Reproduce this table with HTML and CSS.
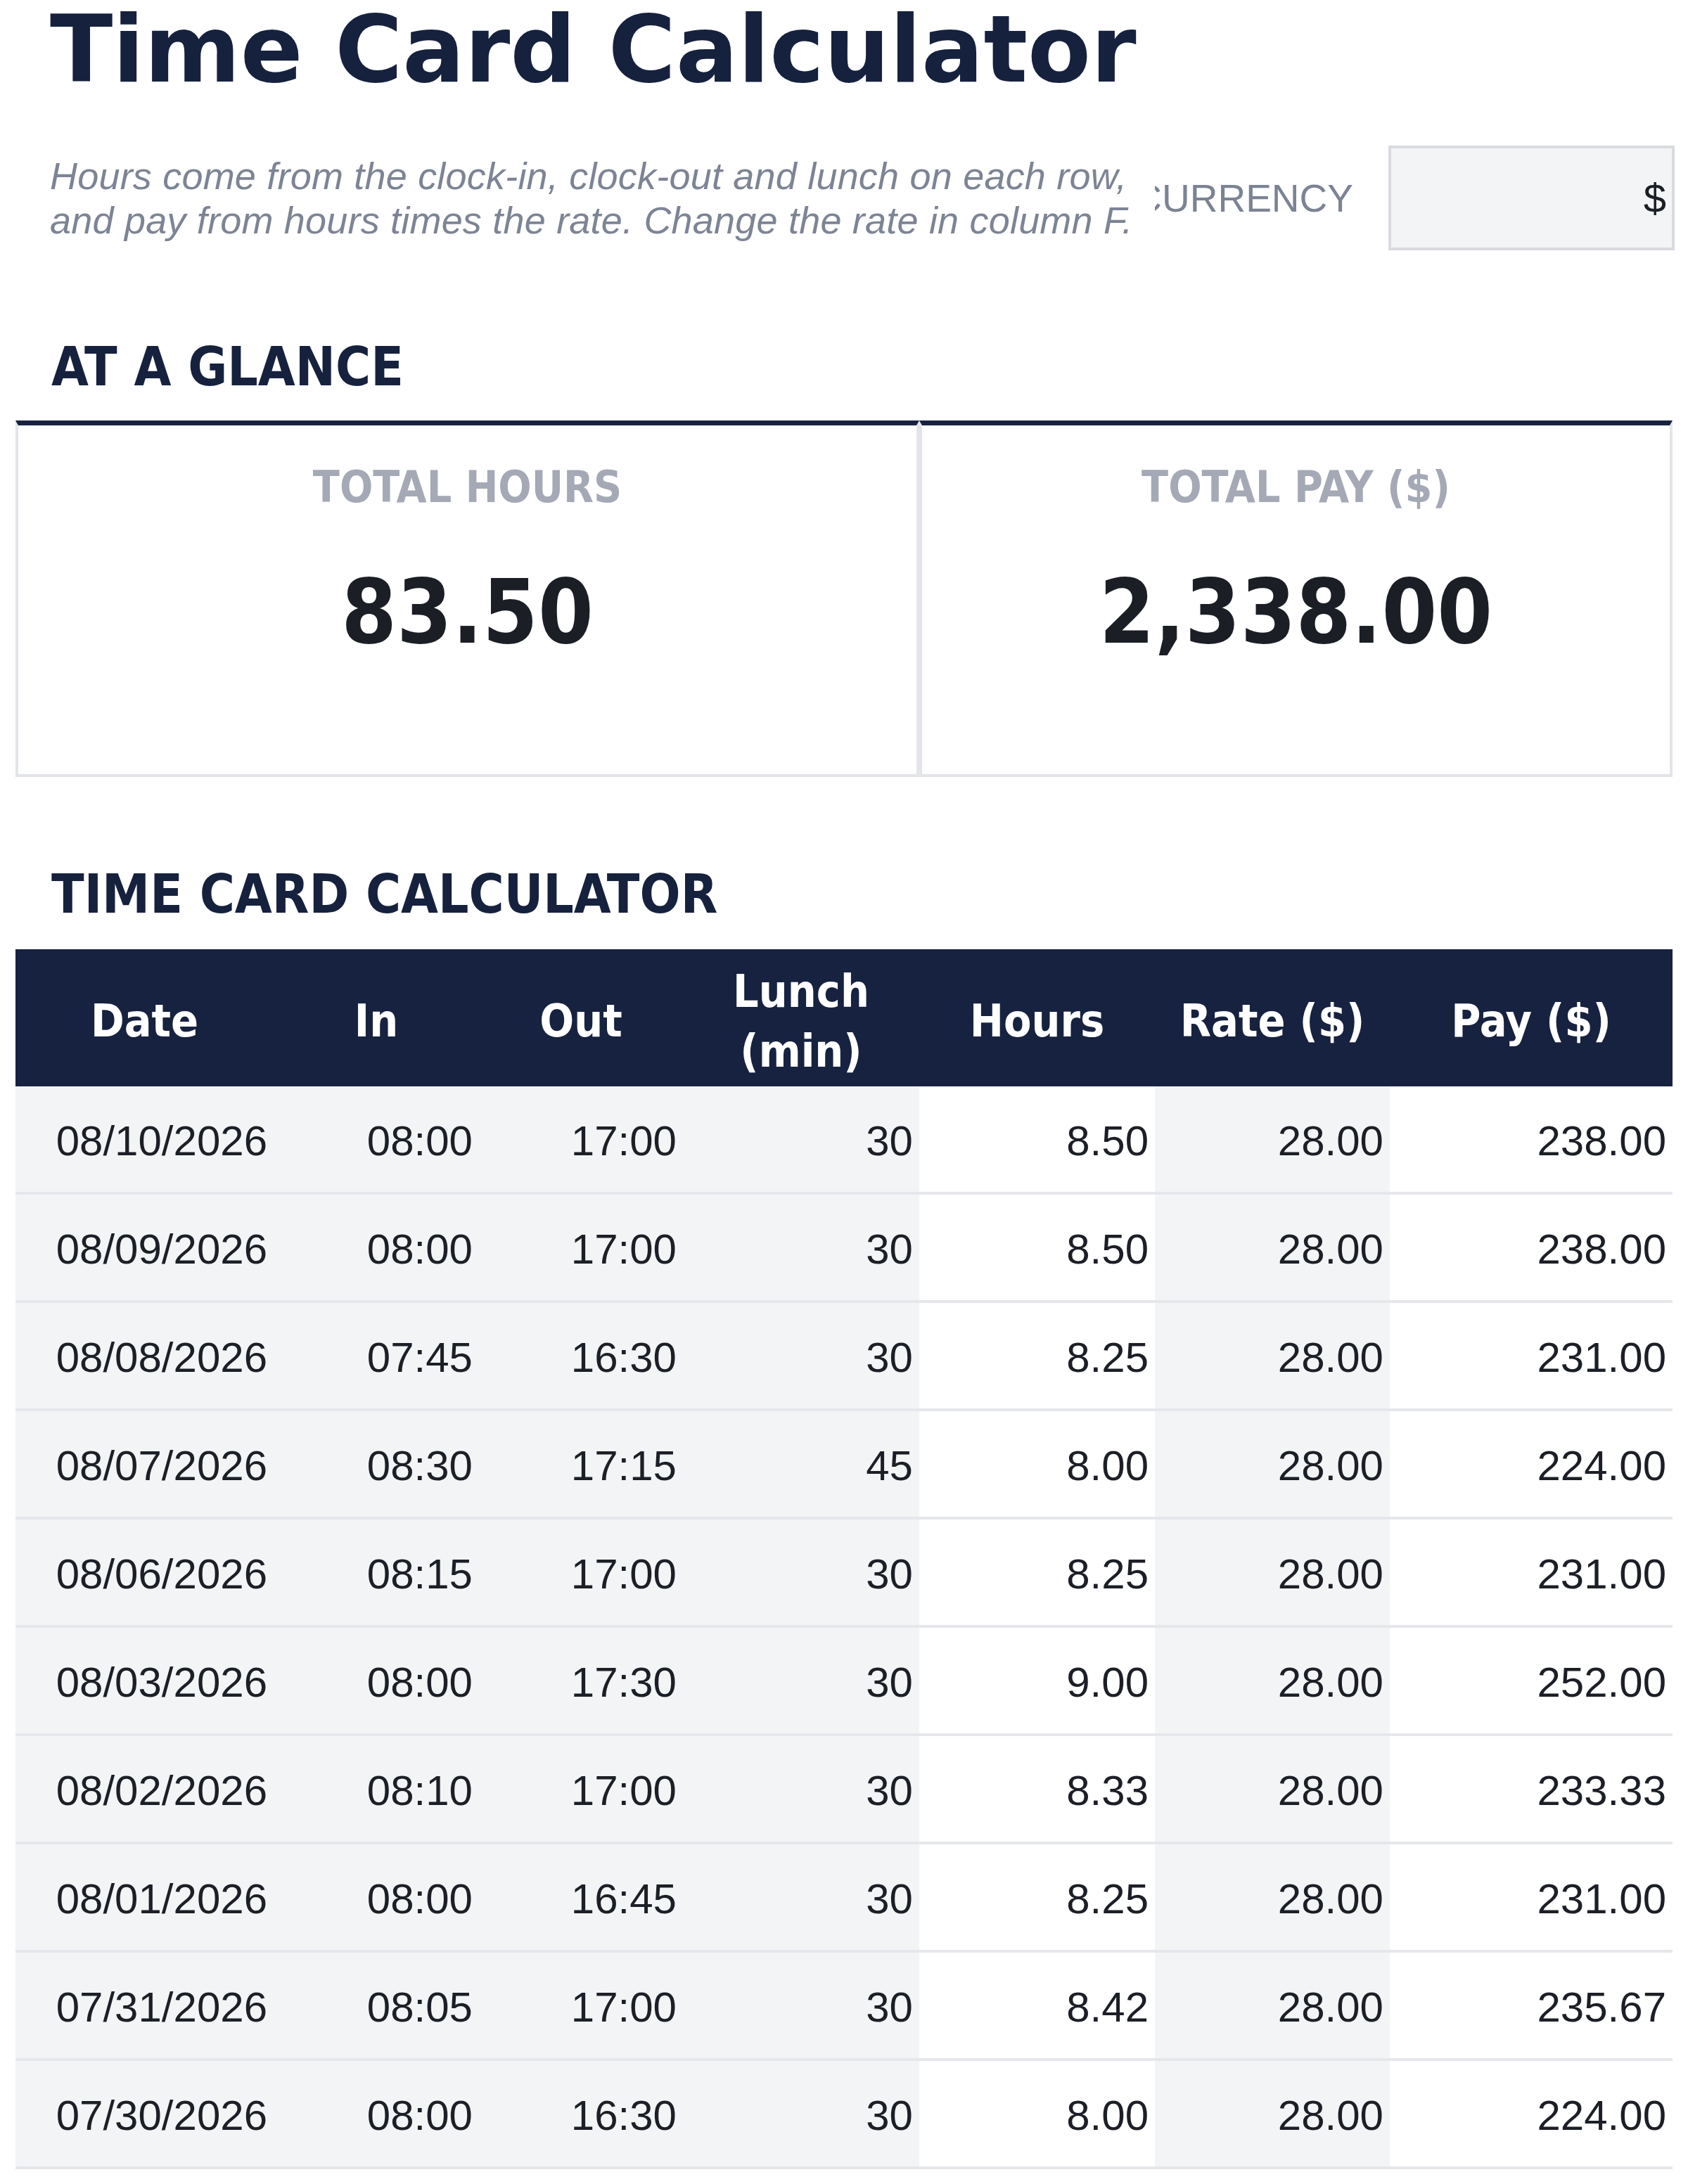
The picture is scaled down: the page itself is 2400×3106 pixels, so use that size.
FILE: index.html
```html
<!DOCTYPE html>
<html lang="en">
<head>
<meta charset="utf-8">
<title>Time Card Calculator</title>
<link rel="stylesheet" href="styles.css">
</head>
<body>
<main class="sheet">
  <header class="top">
    <h1 class="title">Time Card Calculator</h1>
    <div class="intro-row">
      <p class="intro">Hours come from the clock-in, clock-out and lunch on each row, and pay from hours times the rate. Change the rate in column F.</p>
      <div class="currency-label"><span>CURRENCY</span></div>
      <div class="currency-box">$</div>
    </div>
  </header>

  <h2 class="section-title">AT A GLANCE</h2>
  <div class="cards">
    <div class="card">
      <div class="card-label">TOTAL HOURS</div>
      <div class="card-value">83.50</div>
    </div>
    <div class="card">
      <div class="card-label">TOTAL PAY ($)</div>
      <div class="card-value">2,338.00</div>
    </div>
  </div>

  <h2 class="section-title section-title-table">TIME CARD CALCULATOR</h2>
  <div class="table">
    <div class="row head">
      <div class="hcell">Date</div>
      <div class="hcell">In</div>
      <div class="hcell">Out</div>
      <div class="hcell">Lunch (min)</div>
      <div class="hcell">Hours</div>
      <div class="hcell">Rate ($)</div>
      <div class="hcell">Pay ($)</div>
    </div>
    <div class="row"><div class="cell input">08/10/2026</div><div class="cell input">08:00</div><div class="cell input">17:00</div><div class="cell input">30</div><div class="cell">8.50</div><div class="cell input">28.00</div><div class="cell">238.00</div></div>
    <div class="row"><div class="cell input">08/09/2026</div><div class="cell input">08:00</div><div class="cell input">17:00</div><div class="cell input">30</div><div class="cell">8.50</div><div class="cell input">28.00</div><div class="cell">238.00</div></div>
    <div class="row"><div class="cell input">08/08/2026</div><div class="cell input">07:45</div><div class="cell input">16:30</div><div class="cell input">30</div><div class="cell">8.25</div><div class="cell input">28.00</div><div class="cell">231.00</div></div>
    <div class="row"><div class="cell input">08/07/2026</div><div class="cell input">08:30</div><div class="cell input">17:15</div><div class="cell input">45</div><div class="cell">8.00</div><div class="cell input">28.00</div><div class="cell">224.00</div></div>
    <div class="row"><div class="cell input">08/06/2026</div><div class="cell input">08:15</div><div class="cell input">17:00</div><div class="cell input">30</div><div class="cell">8.25</div><div class="cell input">28.00</div><div class="cell">231.00</div></div>
    <div class="row"><div class="cell input">08/03/2026</div><div class="cell input">08:00</div><div class="cell input">17:30</div><div class="cell input">30</div><div class="cell">9.00</div><div class="cell input">28.00</div><div class="cell">252.00</div></div>
    <div class="row"><div class="cell input">08/02/2026</div><div class="cell input">08:10</div><div class="cell input">17:00</div><div class="cell input">30</div><div class="cell">8.33</div><div class="cell input">28.00</div><div class="cell">233.33</div></div>
    <div class="row"><div class="cell input">08/01/2026</div><div class="cell input">08:00</div><div class="cell input">16:45</div><div class="cell input">30</div><div class="cell">8.25</div><div class="cell input">28.00</div><div class="cell">231.00</div></div>
    <div class="row"><div class="cell input">07/31/2026</div><div class="cell input">08:05</div><div class="cell input">17:00</div><div class="cell input">30</div><div class="cell">8.42</div><div class="cell input">28.00</div><div class="cell">235.67</div></div>
    <div class="row"><div class="cell input">07/30/2026</div><div class="cell input">08:00</div><div class="cell input">16:30</div><div class="cell input">30</div><div class="cell">8.00</div><div class="cell input">28.00</div><div class="cell">224.00</div></div>
  </div>
</main>
</body>
</html>
```

FILE: styles.css
```css
* {
  box-sizing: border-box;
}

html, body {
  margin: 0;
  padding: 0;
  background: #ffffff;
}

body {
  font-family: "Liberation Sans", Arial, sans-serif;
  color: #1c1f26;
}

.sheet {
  width: 2400px;
  padding: 0 22px 19px;
}

.title {
  margin: -6px 0 0;
  padding-left: 49px;
  font-family: "DejaVu Sans", sans-serif;
  font-weight: 700;
  font-size: 131px;
  line-height: 154px;
  color: #16213e;
  white-space: nowrap;
}

.intro-row {
  margin-top: 59px;
  height: 149px;
  display: grid;
  grid-template-columns: 1620px 334px 402px;
  align-items: center;
}

.intro {
  margin: 0;
  padding-left: 49px;
  padding-right: 0;
  font-style: italic;
  font-size: 54px;
  letter-spacing: 0.2px;
  line-height: 63px;
  color: #7d8494;
}

.currency-label {
  display: flex;
  justify-content: flex-end;
  overflow: hidden;
  white-space: nowrap;
  padding-right: 52px;
  font-size: 55px;
  line-height: 64px;
  color: #7c8393;
}

.currency-box {
  margin-left: -2px;
  width: 407px;
  height: 149px;
  border: 4px solid #d9dbe0;
  background: #f3f4f6;
  display: flex;
  align-items: center;
  justify-content: flex-end;
  padding-right: 8px;
  font-size: 58px;
  color: #1b1e25;
}

.section-title,
.card,
.hcell {
  font-family: "DejaVu Sans Condensed", "DejaVu Sans", sans-serif;
  font-stretch: condensed;
  font-weight: 700;
}

.section-title {
  margin: 122px 0 0;
  padding-left: 51px;
  font-size: 76px;
  line-height: 88px;
  color: #16213e;
}

.section-title-table {
  margin-top: 123px;
}

.cards {
  margin-top: 32px;
  display: grid;
  grid-template-columns: 1285px 1071px;
}

.card {
  height: 507px;
  border: 4px solid #e3e5e9;
  border-top: 7px solid #172240;
  padding-top: 52px;
  text-align: center;
}

.card-label {
  font-size: 62px;
  line-height: 72px;
  color: #a4a9b5;
}

.card-value {
  margin-top: 69px;
  font-size: 126px;
  line-height: 146px;
  color: #1b1e25;
}

.table {
  margin-top: 34px;
}

.row {
  display: grid;
  grid-template-columns: 367px 292px 290px 336px 335px 334px 402px;
  border-bottom: 4px solid #e5e7eb;
}

.row.head {
  background: #172240;
  border-bottom: 0;
  height: 195px;
}

.hcell {
  display: flex;
  align-items: center;
  justify-content: center;
  text-align: center;
  padding: 10px 20px 0;
  font-size: 64px;
  line-height: 85px;
  color: #ffffff;
}

.cell {
  height: 150px;
  padding: 6px 9px 0 0;
  text-align: right;
  font-size: 60px;
  line-height: 144px;
  color: #1c1f26;
  background: #ffffff;
}

.cell.input {
  background: #f3f4f6;
}
```
